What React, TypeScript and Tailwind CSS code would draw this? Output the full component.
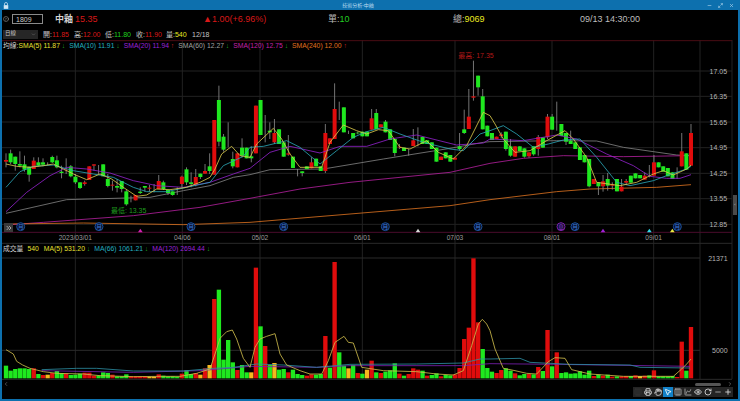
import { ChartSpline, ChevronDown, ChevronLeft, ChevronRight, ChevronsRight, CircleChevronRight, Columns3, Eye, Hand, Maximize2, Minus, MousePointer2, Plus, Printer, RotateCw, X } from "lucide-react";

type Pt = [number, number];

const GREEN = "#1fe81f";
const RED = "#e00c0c";
const YELLOW = "#f5b81e";

// top, bottom, wick high, wick low, colour (r/g/n) - in 3x reference units, y starts at 60
const candles: [number, number, number, number, string][] = [
  [303, 308, 283, 325, "r"], [283, 310, 272, 315, "g"], [293, 315, 293, 335, "g"], [315, 320, 277, 325, "g"], [316, 332, 290, 338, "g"],
  [323, 347, 323, 368, "g"], [305, 330, 295, 330, "r"], [310, 320, 295, 322, "g"], [310, 317, 298, 322, "g"], [314, 315, 310, 318, "n"],
  [294, 310, 290, 312, "g"], [304, 325, 290, 328, "g"], [338, 342, 320, 358, "g"], [332, 334, 298, 345, "r"], [322, 352, 318, 355, "g"],
  [353, 370, 345, 375, "g"], [370, 387, 370, 390, "g"], [370, 375, 365, 380, "r"], [322, 363, 322, 363, "r"], [316, 320, 316, 335, "r"],
  [330, 331, 318, 345, "n"], [316, 352, 316, 352, "g"], [360, 381, 345, 385, "g"], [377, 380, 365, 395, "r"], [381, 386, 360, 400, "g"],
  [366, 390, 366, 400, "g"], [397, 436, 392, 440, "g"], [420, 421, 410, 430, "n"], [408, 424, 408, 424, "r"], [398, 402, 385, 405, "g"],
  [381, 386, 381, 398, "g"], [386, 389, 378, 398, "r"], [388, 389, 375, 400, "n"], [366, 390, 348, 390, "r"], [370, 390, 365, 393, "g"],
  [393, 402, 393, 408, "g"], [397, 408, 397, 410, "g"], [398, 399, 385, 408, "n"], [353, 375, 350, 385, "r"], [331, 370, 325, 378, "g"],
  [370, 375, 340, 385, "g"], [354, 378, 330, 382, "r"], [344, 354, 344, 360, "g"], [336, 344, 315, 344, "r"], [322, 336, 283, 345, "g"],
  [183, 347, 183, 347, "r"], [123, 248, 80, 262, "g"], [233, 272, 225, 278, "g"], [240, 241, 190, 265, "n"], [300, 322, 278, 328, "g"],
  [283, 325, 283, 325, "r"], [266, 290, 238, 295, "g"], [266, 298, 266, 298, "g"], [292, 298, 262, 310, "g"], [140, 283, 140, 283, "r"],
  [123, 228, 123, 228, "g"], [210, 211, 168, 250, "n"], [215, 220, 190, 240, "g"], [222, 250, 180, 255, "r"], [211, 255, 211, 255, "g"],
  [250, 293, 250, 293, "g"], [283, 287, 228, 290, "r"], [293, 327, 293, 327, "g"], [340, 341, 330, 352, "n"], [337, 342, 337, 352, "g"],
  [322, 330, 322, 330, "g"], [310, 328, 295, 328, "r"], [299, 322, 299, 322, "g"], [322, 336, 322, 336, "g"], [222, 336, 195, 342, "r"],
  [238, 255, 238, 255, "r"], [150, 240, 73, 240, "r"], [150, 151, 128, 183, "n"], [145, 220, 145, 220, "g"], [220, 221, 215, 225, "n"],
  [222, 238, 222, 238, "g"], [221, 223, 218, 226, "g"], [218, 232, 218, 232, "g"], [218, 232, 218, 232, "g"], [178, 212, 150, 212, "r"],
  [162, 210, 150, 210, "g"], [196, 205, 196, 205, "r"], [188, 220, 183, 220, "g"], [211, 243, 211, 243, "g"], [240, 282, 240, 292, "g"],
  [263, 265, 255, 270, "r"], [266, 276, 266, 276, "g"], [278, 279, 270, 290, "n"], [244, 261, 210, 261, "r"], [235, 236, 205, 262, "n"],
  [234, 255, 234, 255, "g"], [244, 255, 244, 255, "g"], [250, 270, 250, 270, "g"], [266, 308, 266, 308, "g"], [293, 303, 293, 303, "r"],
  [280, 298, 280, 298, "g"], [288, 308, 288, 308, "g"], [296, 302, 296, 302, "r"], [262, 270, 222, 275, "g"], [211, 222, 152, 225, "g"],
  [173, 210, 90, 210, "r"], [112, 116, 5, 125, "r"], [50, 85, 50, 110, "g"], [112, 211, 90, 211, "g"], [200, 232, 200, 232, "g"],
  [222, 243, 222, 243, "g"], [233, 240, 233, 240, "r"], [226, 231, 220, 238, "r"], [218, 270, 218, 275, "g"], [262, 290, 240, 293, "g"],
  [262, 293, 262, 293, "r"], [262, 276, 262, 276, "g"], [268, 293, 268, 296, "g"], [280, 292, 280, 296, "r"], [262, 286, 262, 290, "g"],
  [234, 270, 228, 290, "r"], [235, 266, 235, 266, "g"], [173, 235, 165, 240, "r"], [173, 212, 165, 212, "g"], [195, 196, 128, 215, "n"],
  [195, 231, 195, 231, "g"], [222, 248, 222, 258, "g"], [245, 255, 215, 255, "g"], [250, 270, 250, 270, "g"], [265, 303, 265, 303, "g"],
  [288, 310, 288, 310, "g"], [300, 382, 300, 385, "g"], [360, 375, 360, 375, "r"], [370, 382, 370, 408, "g"], [367, 382, 348, 398, "r"],
  [360, 380, 342, 395, "g"], [376, 380, 370, 392, "r"], [360, 397, 360, 397, "g"], [383, 397, 360, 397, "r"], [366, 371, 360, 378, "r"],
  [350, 371, 350, 371, "g"], [343, 358, 343, 358, "g"], [348, 358, 348, 358, "g"], [350, 362, 340, 362, "r"], [340, 341, 318, 355, "n"],
  [310, 350, 288, 350, "r"], [310, 325, 310, 325, "g"], [322, 338, 322, 338, "g"], [327, 352, 327, 352, "g"], [340, 360, 340, 360, "g"],
  [340, 341, 325, 360, "n"], [277, 322, 222, 322, "r"], [283, 332, 283, 332, "g"], [222, 320, 195, 320, "r"],
];

// volume bar tops, baseline is 418, y starts at 240
const volumes: [number, string][] = [
  [380, "g"], [395, "g"], [390, "g"], [388, "g"], [388, "g"], [390, "g"], [388, "r"], [405, "g"], [408, "r"], [407, "y"],
  [402, "r"], [396, "g"], [402, "g"], [403, "r"], [408, "g"], [407, "g"], [404, "g"], [401, "r"], [401, "r"], [410, "r"],
  [410, "g"], [400, "g"], [402, "g"], [407, "r"], [412, "g"], [412, "g"], [406, "g"], [412, "r"], [412, "r"], [412, "r"],
  [412, "r"], [413, "y"], [413, "y"], [406, "r"], [410, "g"], [412, "g"], [412, "g"], [413, "g"], [404, "r"], [394, "g"],
  [405, "g"], [402, "r"], [407, "y"], [388, "r"], [378, "y"], [180, "r"], [152, "g"], [362, "g"], [303, "g"], [370, "g"],
  [393, "r"], [378, "g"], [400, "g"], [400, "y"], [86, "r"], [262, "g"], [321, "r"], [378, "g"], [372, "y"], [392, "g"],
  [390, "g"], [400, "r"], [392, "g"], [405, "g"], [408, "g"], [410, "r"], [406, "r"], [407, "g"], [405, "g"], [291, "r"],
  [386, "g"], [69, "r"], [340, "g"], [380, "g"], [388, "y"], [378, "g"], [402, "r"], [404, "g"], [392, "y"], [365, "r"],
  [400, "g"], [402, "r"], [398, "g"], [394, "g"], [373, "g"], [404, "r"], [410, "g"], [405, "r"], [388, "r"], [392, "r"],
  [395, "g"], [410, "r"], [408, "g"], [403, "g"], [412, "r"], [408, "g"], [409, "g"], [406, "r"], [387, "r"], [300, "r"],
  [266, "r"], [58, "r"], [250, "r"], [330, "g"], [387, "g"], [398, "g"], [402, "r"], [393, "r"], [388, "g"], [395, "g"],
  [403, "r"], [409, "g"], [405, "g"], [405, "r"], [406, "g"], [384, "r"], [396, "g"], [273, "r"], [382, "g"], [340, "r"],
  [402, "g"], [400, "g"], [404, "g"], [403, "g"], [397, "g"], [407, "g"], [395, "g"], [411, "r"], [407, "g"], [410, "r"],
  [407, "g"], [413, "r"], [412, "g"], [412, "r"], [411, "r"], [411, "g"], [409, "r"], [411, "y"], [410, "r"], [409, "g"],
  [394, "r"], [412, "g"], [412, "g"], [412, "g"], [411, "g"], [414, "r"], [308, "r"], [395, "g"], [264, "r"],
];

const at = (offset: number, pts: Pt[]): Pt[] => pts.map(([x, y]) => [x + offset, y]);

const priceLines: { color: string; pts: Pt[] }[] = [
  { color: "#7f7f7f", pts: [...at(0, [[18, 463], [200, 422], [450, 415], [550, 395], [630, 380], [700, 355]]), ...at(750, [[0, 347], [60, 332], [220, 330], [400, 300], [600, 268], [700, 250]]), ...at(1470, [[0, 248], [200, 245], [320, 246], [400, 265], [560, 288], [603, 290]])] },
  { color: "#b01f9a", pts: [...at(0, [[18, 498], [130, 490], [400, 470], [600, 445]]), ...at(750, [[0, 418], [150, 390], [300, 370], [600, 340]]), ...at(1470, [[0, 313], [100, 298], [220, 290], [400, 293], [600, 290]])] },
  { color: "#d9701f", pts: [...at(0, [[18, 495], [250, 492], [550, 497]]), ...at(750, [[0, 490], [300, 465], [600, 440]]), ...at(1470, [[0, 422], [200, 398], [300, 390], [500, 385], [603, 377]])] },
  { color: "#8f22c8", pts: [...at(0, [[18, 458], [80, 400], [150, 350], [200, 325], [260, 330], [330, 342], [400, 365], [470, 380], [550, 385], [630, 370], [700, 345]]), ...at(750, [[0, 328], [60, 280], [120, 262], [210, 282], [270, 262], [350, 262], [420, 240], [500, 228], [620, 258], [700, 252]]), ...at(1470, [[0, 240], [100, 245], [200, 228], [260, 240], [350, 285], [430, 320], [480, 352], [530, 358], [570, 358], [603, 347]])] },
  { color: "#2aa5b5", pts: [...at(0, [[18, 385], [60, 338], [100, 322], [160, 318], [220, 335], [280, 345], [340, 355], [400, 385], [440, 398], [500, 398], [560, 385], [630, 370], [670, 320], [730, 292]]), ...at(750, [[0, 265], [40, 262], [110, 245], [150, 265], [210, 315], [260, 275], [310, 235], [350, 218], [400, 205], [450, 225], [520, 250], [600, 270], [640, 275], [690, 225]]), ...at(1470, [[0, 215], [40, 200], [80, 225], [130, 265], [175, 255], [220, 243], [270, 240], [320, 295], [380, 370], [420, 380], [490, 365], [530, 350], [590, 330], [603, 322]])] },
  { color: "#d8c84a", pts: [...at(0, [[18, 315], [50, 322], [90, 325], [130, 320], [160, 315], [190, 330], [220, 345], [260, 362], [300, 345], [335, 360], [370, 385], [410, 412], [440, 408], [470, 390], [510, 392], [560, 385], [600, 370], [630, 355], [645, 330], [665, 285], [695, 262], [720, 290]]), ...at(750, [[0, 295], [20, 255], [70, 208], [95, 240], [120, 285], [150, 325], [215, 325], [240, 250], [280, 198], [320, 215], [350, 225], [385, 212], [415, 215], [450, 265], [480, 270], [530, 245], [565, 280], [610, 300], [650, 260], [700, 160]]), ...at(1470, [[0, 170], [15, 195], [40, 240], [75, 280], [120, 275], [170, 245], [225, 215], [250, 240], [290, 295], [320, 370], [390, 380], [440, 370], [490, 345], [520, 335], [550, 348], [590, 330], [603, 318]])] },
];

const volumeLines: { color: string; pts: Pt[] }[] = [
  { color: "#7a1fb0", pts: [...at(0, [[125, 395], [400, 400], [600, 395]]), ...at(750, [[0, 382], [200, 385], [300, 380], [640, 380]]), ...at(1470, [[0, 374], [200, 376], [600, 382]])] },
  { color: "#2b8ba0", pts: [...at(0, [[125, 392], [230, 388], [290, 388], [400, 396], [550, 396], [640, 388], [700, 385]]), ...at(750, [[20, 375], [100, 378], [200, 385], [300, 376], [500, 375], [640, 372], [690, 360]]), ...at(1470, [[0, 360], [90, 358], [120, 370], [240, 376], [420, 378], [450, 385], [600, 387]])] },
  { color: "#cdbb4a", pts: [...at(0, [[18, 332], [40, 345], [50, 367], [68, 378], [90, 388], [130, 398], [170, 403], [250, 405], [300, 410], [400, 413], [480, 412], [540, 412], [590, 403], [630, 390], [650, 330], [660, 298], [680, 278], [697, 273], [710, 300], [730, 358]]), ...at(750, [[0, 385], [15, 325], [30, 300], [50, 292], [75, 284], [90, 345], [110, 378], [150, 395], [180, 405], [215, 405], [235, 365], [255, 310], [282, 292], [295, 310], [310, 312], [335, 385], [400, 395], [500, 398], [560, 405], [610, 408], [640, 395], [665, 320], [685, 255], [697, 241], [710, 255]]), ...at(1470, [[0, 275], [15, 330], [40, 388], [75, 395], [110, 403], [140, 405], [175, 368], [195, 356], [225, 358], [245, 392], [300, 405], [400, 412], [550, 412], [575, 390], [590, 375], [603, 360]])] },
];

const gridX = [226, 547, 780, 1087, 1365, 1656, 1961, 2100];
const priceY = [36, 112, 189, 266, 343, 419, 496];
const priceTicks = ["17.05", "16.35", "15.65", "14.95", "14.25", "13.55", "12.85"];
const dates: [number, string][] = [[226, "2023/03/01"], [547, "04/06"], [780, "05/02"], [1087, "06/01"], [1365, "07/03"], [1656, "08/01"], [1961, "09/01"]];
const moons: [number, string, string][] = [[62, "#1a4f9a", "月"], [297, "#1a4f9a", "月"], [573, "#1a4f9a", "月"], [851, "#1a4f9a", "月"], [1156, "#1a4f9a", "月"], [1434, "#1a4f9a", "月"], [1683, "#7a1fa8", "息"], [1725, "#1a4f9a", "月"], [2032, "#1a4f9a", "月"]];
const marks: [number, string][] = [[421, "#d020b0"], [1254, "#d8d8d8"], [1809, "#a020d8"], [1948, "#30d8e8"], [2017, "#e8e840"]];

const candleX = (i: number) => 18 + i * 13.885;
const polyPts = (pts: Pt[]) => pts.map((p) => p.join(",")).join(" ");

function PriceChart() {
  return (
    <svg viewBox="0 -57 2220 612" className="block h-[204px] w-[740px]">
      {gridX.map((x) => <line key={x} x1={x} x2={x} y1={-57} y2={555} stroke="#222" strokeWidth={3} />)}
      <line x1={2196} x2={2196} y1={-57} y2={555} stroke="#222" strokeWidth={3} />
      {priceY.map((y) => <line key={y} x1={6} x2={2196} y1={y} y2={y} stroke="#222" strokeWidth={3} />)}
      <line x1={6} x2={2196} y1={-55} y2={-55} stroke="#4a0c14" strokeWidth={3} />
      <line x1={6} x2={2196} y1={520} y2={520} stroke="#4a0c2c" strokeWidth={3} />
      <line x1={6} x2={2196} y1={553} y2={553} stroke="#2a2a2a" strokeWidth={3} />
      {priceLines.slice(0, 3).map((l) => <polyline key={l.color} points={polyPts(l.pts)} fill="none" stroke={l.color} strokeWidth={2.5} />)}
      {candles.map(([t, b, h, l, c], i) => {
        const x = candleX(i);
        return (
          <g key={i}>
            <line x1={x} x2={x} y1={h} y2={l} stroke="#8a8a8a" strokeWidth={2.5} />
            {c !== "n" && <rect x={x - 6} y={t} width={12} height={b - t} fill={c === "r" ? RED : GREEN} />}
          </g>
        );
      })}
      {priceLines.slice(3).map((l) => <polyline key={l.color} points={polyPts(l.pts)} fill="none" stroke={l.color} strokeWidth={2.5} strokeLinejoin="round" />)}
      {priceTicks.map((t, i) => <text key={t} x={2155} y={priceY[i] + 8} fontSize={21} fill="#b4b4b4" textAnchor="middle">{t}</text>)}
      {dates.map(([x, d]) => <text key={d} x={x} y={542} fontSize={20} fill="#9a9a9a" textAnchor="middle">{d}</text>)}
      {moons.map(([x, c, t]) => (
        <g key={x}>
          <circle cx={x} cy={503} r={12} fill="#0a1430" stroke={c} strokeWidth={3} />
          <text x={x} y={510} fontSize={18} fill={c === "#1a4f9a" ? "#3a78d8" : "#a030d8"} textAnchor="middle">{t}</text>
        </g>
      ))}
      {marks.map(([x, c]) => <polygon key={x} points={`${x - 7},520 ${x + 7},520 ${x},509`} fill={c} />)}
      <text x={1375} y={-3} fontSize={21} fill="#b01818">最高: 17.35</text>
      <text x={333} y={463} fontSize={21} fill="#1f9a1f">最低: 13.35</text>
    </svg>
  );
}

function VolumeChart() {
  return (
    <svg viewBox="0 15 2220 408" className="block h-[136px] w-[740px]">
      {gridX.map((x) => <line key={x} x1={x} x2={x} y1={15} y2={420} stroke="#222" strokeWidth={3} />)}
      <line x1={2196} x2={2196} y1={15} y2={420} stroke="#222" strokeWidth={3} />
      <line x1={6} x2={2100} y1={57} y2={57} stroke="#2b2b2b" strokeWidth={3} />
      <line x1={6} x2={2100} y1={334} y2={334} stroke="#2b2b2b" strokeWidth={3} />
      <line x1={6} x2={2196} y1={421} y2={421} stroke="#2b2b2b" strokeWidth={3} />
      {volumes.map(([t, c], i) => (
        <rect key={i} x={candleX(i) - 6.5} y={t} width={13} height={418 - t} fill={c === "r" ? RED : c === "g" ? GREEN : YELLOW} />
      ))}
      {volumeLines.map((l) => <polyline key={l.color} points={polyPts(l.pts)} fill="none" stroke={l.color} strokeWidth={2.5} strokeLinejoin="round" />)}
      <text x={2183} y={65} fontSize={21} fill="#b4b4b4" textAnchor="end">21371</text>
      <text x={2183} y={342} fontSize={21} fill="#b4b4b4" textAnchor="end">5000</text>
    </svg>
  );
}

const tools = [
  { Icon: Columns3, cls: "text-[#333]" },
  { Icon: Printer, cls: "text-[#e0e0e0]" },
  { Icon: Hand, cls: "text-[#e0e0e0]" },
  { Icon: MousePointer2, cls: "bg-[#1281c8] text-white" },
  { Icon: Columns3, cls: "text-[#b0b0b0]" },
  { Icon: ChartSpline, cls: "text-[#b0b0b0]" },
  { Icon: Eye, cls: "text-[#e0e0e0]" },
  { Icon: RotateCw, cls: "text-[#e0e0e0]" },
  { Icon: Minus, cls: "text-[#b0b0b0]" },
  { Icon: Plus, cls: "text-[#e0e0e0]" },
];

export default function App() {
  return (
    <div className="relative flex h-[401px] w-[740px] flex-col overflow-hidden bg-black font-['Liberation_Sans','Noto_Sans_CJK_TC',sans-serif]">
      <div className="flex h-[10px] shrink-0 items-center bg-[#0d70ae] px-[3px] text-white">
        <svg viewBox="0 0 8 9" className="h-[7px] w-[6px]" fill="#cfe6f5"><rect x="1" y="4" width="6" height="5" /><path d="M2 4V2.5a2 2 0 0 1 4 0V4" fill="none" stroke="#cfe6f5" /></svg>
        <span className="flex-1 text-center text-[5px] leading-none text-[#bcdcf0]">技術分析-中釉</span>
        <div className="flex items-center gap-[6px] pr-[3px] text-[#a8d0ea]">
          <Minus size={5} strokeWidth={3} />
          <Maximize2 size={5} strokeWidth={3} />
          <X size={5} strokeWidth={3} />
        </div>
      </div>

      <div className="flex h-[18px] shrink-0 items-center pl-[3px] text-[9px] leading-none">
        <CircleChevronRight size={6} className="mr-[3px] text-[#aaa]" />
        <div className="flex h-[10px] w-[31px] items-center border border-[#8a8a8a] pl-[3px] text-[7px] text-[#ccc]">1809</div>
        <span className="ml-[12px] w-[20px] font-bold text-[#d4d4d4]">中釉</span>
        <span className="w-[128px] text-[#d81818]">15.35</span>
        <span className="w-[125px] text-[#d81818]">▲1.00(+6.96%)</span>
        <span className="w-[125px] text-[#bbb]">單:<span className="text-[#22cc22]">10</span></span>
        <span className="w-[127px] text-[#bbb]">總:<span className="text-[#e8e820]">9069</span></span>
        <span className="text-[#bdbdbd]">09/13 14:30:00</span>
      </div>

      <div className="flex h-[12px] shrink-0 items-center pl-[3px] text-[7px] leading-none text-[#c4c4c4]">
        <div className="mr-[5px] flex h-[9px] w-[35px] items-center justify-between bg-[#262626] px-[2px] text-[5.5px]">
          日線
          <ChevronDown size={5} className="text-[#888]" />
        </div>
        <span className="w-[31px]">開:<span className="text-[#d81818]">11.85</span></span>
        <span className="w-[31px]">高:<span className="text-[#d81818]">12.00</span></span>
        <span className="w-[31px]">低:<span className="text-[#1fd01f]">11.80</span></span>
        <span className="w-[30px]">收:<span className="text-[#d81818]">11.90</span></span>
        <span className="w-[26px]">量:<span className="text-[#e8e820]">540</span></span>
        <span>12/18</span>
      </div>

      <div className="relative shrink-0">
        <PriceChart />
        <div className="absolute left-[3px] top-[1px] flex text-[6.8px] leading-[9px] whitespace-nowrap">
          <span className="text-[#cfcfcf]">均線:</span>
          <span className="text-[#e8e030]">SMA(5) 11.87 <span className="text-[#1fa01f]">↓</span></span>
          <span className="ml-[4px] text-[#23b0c0]">SMA(10) 11.91 <span className="text-[#1fa01f]">↓</span></span>
          <span className="ml-[4px] text-[#9a22d8]">SMA(20) 11.94 <span className="text-[#c82020]">↑</span></span>
          <span className="ml-[4px] text-[#a0a0a0]">SMA(60) 12.27 <span className="text-[#1fa01f]">↓</span></span>
          <span className="ml-[4px] text-[#c420a8]">SMA(120) 12.75 <span className="text-[#1fa01f]">↓</span></span>
          <span className="ml-[4px] text-[#e0701f]">SMA(240) 12.00 <span className="text-[#c82020]">↑</span></span>
        </div>
        <div className="absolute left-[4px] top-[183px] flex h-[9px] w-[9px] items-center justify-center bg-[#3a3a3a] text-[#ddd]">
          <ChevronsRight size={8} />
        </div>
      </div>

      <div className="relative shrink-0">
        <VolumeChart />
        <div className="absolute left-[3px] top-[0px] flex text-[6.8px] leading-[9px] whitespace-nowrap">
          <span className="text-[#cfcfcf]">成交量</span>
          <span className="ml-[4px] text-[#e8e030]">540</span>
          <span className="ml-[5px] text-[#e8e030]">MA(5) 531.20 <span className="text-[#1fa01f]">↓</span></span>
          <span className="ml-[4px] text-[#23b0c0]">MA(66) 1061.21 <span className="text-[#1fa01f]">↓</span></span>
          <span className="ml-[4px] text-[#9a22d8]">MA(120) 2694.44 <span className="text-[#1fa01f]">↓</span></span>
        </div>
      </div>

      <div className="relative flex-1">
        <ChevronLeft size={6} className="absolute left-[3px] top-[1px] text-[#999]" />
        <div className="absolute left-[695px] top-[3px] h-[3px] w-[26px] rounded-sm bg-[#555]" />
        <ChevronRight size={6} className="absolute left-[727px] top-[1px] text-[#999]" />
        <div className="absolute left-[633px] top-[7px] flex h-[10px] bg-[#242424]">
          {tools.map(({ Icon, cls }, i) => (
            <div key={i} className={`flex h-[10px] w-[10px] items-center justify-center ${cls}`}>
              <Icon size={8} strokeWidth={2.5} />
            </div>
          ))}
        </div>
      </div>

      <div className="absolute left-0 top-0 h-full w-[2px] bg-[#0d70ae]" />
      <div className="absolute right-0 top-0 h-full w-[2px] bg-[#0d70ae]" />
      <div className="absolute bottom-0 left-0 h-[2px] w-full bg-[#0d70ae]" />
      <div className="absolute left-[733px] top-[195px] flex h-[20px] w-[4px] items-center justify-center bg-[#4a4a4a] text-[4px] text-[#ccc]">‹</div>
    </div>
  );
}
